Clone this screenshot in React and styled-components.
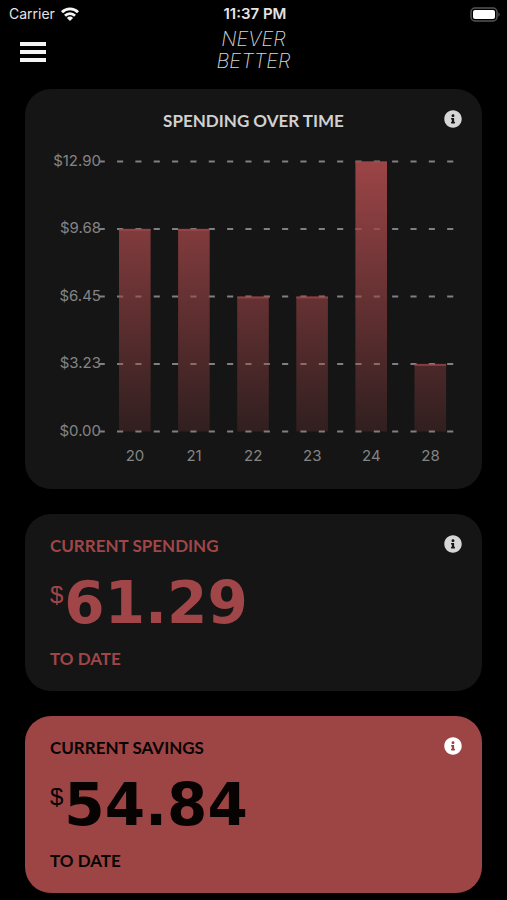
import React from 'react';
import styled, { createGlobalStyle } from 'styled-components';
import { FaInfoCircle } from 'react-icons/fa';

const GlobalStyle = createGlobalStyle`
  * {
    box-sizing: border-box;
  }
  body {
    margin: 0;
    background-color: #000000;
    color: #d6d6d6;
    font-family: Lato, sans-serif;
  }
`;

const Page = styled.div`
  display: flex;
  flex-direction: column;
`;

const StatusBar = styled.div`
  display: grid;
  grid-template-columns: 1fr auto 1fr;
  align-items: center;
  height: 28px;
  padding: 0 6px 0 9px;
  font-family: Inter, sans-serif;
  font-size: 14px;
  line-height: 20px;
  color: #e4e4e4;
`;

const Carrier = styled.div`
  display: flex;
  align-items: center;
  gap: 6px;
`;

const Time = styled.time`
  font-size: 15px;
  font-weight: 600;
`;

const BatteryIcon = styled.svg`
  justify-self: end;
`;

const Header = styled.header`
  display: grid;
  grid-template-columns: 1fr auto 1fr;
  height: 48px;
  padding: 0 20px;
`;

const MenuButton = styled.button`
  display: flex;
  flex-direction: column;
  gap: 4px;
  width: 26px;
  margin-top: 14px;
  padding: 0;
  align-self: start;
  border: none;
  background: none;
  cursor: pointer;
`;

const MenuLine = styled.span`
  width: 26px;
  height: 4px;
  background-color: #f5f5f5;
`;

const Logo = styled.h1`
  margin: 0;
  font-family: Inter, sans-serif;
  font-size: 20px;
  font-style: italic;
  font-weight: 200;
  line-height: 22px;
  text-align: center;
  color: #d8d8d8;
`;

const Main = styled.main`
  display: flex;
  flex-direction: column;
  gap: 25px;
  padding: 13px 25px 7px;
`;

const Card = styled.section`
  position: relative;
  padding: ${({ $chart }) => ($chart ? '20px 0 0' : '20px 25px')};
  border-radius: 26px;
  background-color: ${({ $filled }) => ($filled ? '#9d4545' : '#151515')};
  color: ${({ $filled }) => ($filled ? '#080303' : '#a04648')};
`;

const Title = styled.h2`
  margin: 0;
  font-size: 17px;
  font-weight: 700;
  line-height: 24px;
`;

const ChartTitle = styled(Title)`
  text-align: center;
  color: #d0d0d0;
`;

const InfoButton = styled.button`
  position: absolute;
  top: 21px;
  right: 20px;
  display: flex;
  padding: 0;
  border: none;
  background: none;
  font-size: 18px;
  color: ${({ $bright }) => ($bright ? '#ffffff' : '#d6d6d6')};
  cursor: pointer;
`;

const Chart = styled.svg`
  display: block;
  width: 100%;
  height: auto;
`;

const AxisLabel = styled.text`
  font-family: Inter, sans-serif;
  font-size: 15px;
  fill: #848484;
`;

const Amount = styled.p`
  display: flex;
  align-items: flex-start;
  gap: 1px;
  margin: 13px 0 11px;
  height: 65px;
`;

const Currency = styled.span`
  margin-top: 8px;
  font-family: 'Liberation Sans', sans-serif;
  font-size: 24px;
  line-height: 32px;
`;

const Value = styled.span`
  font-family: 'DejaVu Sans', sans-serif;
  font-size: 58px;
  font-weight: 700;
  line-height: 65px;
`;

const ticks = ['$12.90', '$9.68', '$6.45', '$3.23', '$0.00'];

const spending = [
  { day: '20', amount: 9.68 },
  { day: '21', amount: 9.68 },
  { day: '22', amount: 6.45 },
  { day: '23', amount: 6.45 },
  { day: '24', amount: 12.9 },
  { day: '28', amount: 3.23 },
];

const TOP = 28.5;
const BOTTOM = 298.5;
const MAX = 12.9;

const Info = ({ label, bright }) => (
  <InfoButton type="button" aria-label={label} $bright={bright}>
    <FaInfoCircle />
  </InfoButton>
);

const SpendingChart = () => (
  <Chart viewBox="0 0 457 356" role="img" aria-label="Spending over time">
    <defs>
      <linearGradient id="bar" gradientUnits="userSpaceOnUse" x1="0" y1={TOP} x2="0" y2={BOTTOM}>
        <stop offset="0" stopColor="#a04648" stopOpacity="0.97" />
        <stop offset="1" stopColor="#a04648" stopOpacity="0.2" />
      </linearGradient>
    </defs>
    {ticks.map((tick, i) => {
      const y = TOP + (i * (BOTTOM - TOP)) / (ticks.length - 1);
      return (
        <g key={tick}>
          <AxisLabel x="76" y={y + 4} textAnchor="end">{tick}</AxisLabel>
          <line x1="73.7" x2="429" y1={y} y2={y} stroke="#808080" strokeWidth="2" strokeDasharray="6.1 12.24" />
        </g>
      );
    })}
    {spending.map(({ day, amount }, i) => {
      const x = 94 + i * 59.1;
      const height = (amount / MAX) * (BOTTOM - TOP);
      return (
        <g key={day}>
          <rect x={x} y={BOTTOM - height} width="31.6" height={height} fill="url(#bar)" />
          <rect x={x} y={BOTTOM - height} width="31.6" height="2" fill="#a04648" fillOpacity="0.7" />
          <AxisLabel x={x + 16} y="328" textAnchor="middle">{day}</AxisLabel>
        </g>
      );
    })}
  </Chart>
);

const TotalCard = ({ title, value, filled }) => (
  <Card $filled={filled}>
    <Title>{title}</Title>
    <Info label={`About ${title.toLowerCase()}`} bright={filled} />
    <Amount>
      <Currency>$</Currency>
      <Value>{value}</Value>
    </Amount>
    <Title as="p">TO DATE</Title>
  </Card>
);

const App = () => (
  <Page>
    <GlobalStyle />
    <StatusBar>
      <Carrier>
        Carrier
        <svg width="18" height="14" viewBox="0 0 18 14" fill="none" stroke="#f5f5f5" strokeWidth="2.8">
          <path d="M1 5.2a11.3 11.3 0 0 1 16 0" />
          <path d="M4 8.7a7 7 0 0 1 10 0" />
          <path d="M9 14 5.9 10.9a4.4 4.4 0 0 1 6.2 0z" fill="#f5f5f5" stroke="none" />
        </svg>
      </Carrier>
      <Time>11:37 PM</Time>
      <BatteryIcon width="31" height="15" viewBox="0 0 31 15">
        <rect x="1" y="1" width="26" height="13" rx="4" fill="none" stroke="#555555" strokeWidth="1.5" />
        <rect x="3" y="3" width="22" height="9" rx="2" fill="#ffffff" />
        <path d="M28.5 5.2a3 3 0 0 1 0 4.6z" fill="#666666" />
      </BatteryIcon>
    </StatusBar>
    <Header>
      <MenuButton type="button" aria-label="Menu">
        <MenuLine />
        <MenuLine />
        <MenuLine />
      </MenuButton>
      <Logo>
        NEVER
        <br />
        BETTER
      </Logo>
    </Header>
    <Main>
      <Card $chart>
        <ChartTitle>SPENDING OVER TIME</ChartTitle>
        <Info label="About spending over time" />
        <SpendingChart />
      </Card>
      <TotalCard title="CURRENT SPENDING" value="61.29" />
      <TotalCard title="CURRENT SAVINGS" value="54.84" filled />
    </Main>
  </Page>
);

export default App;
